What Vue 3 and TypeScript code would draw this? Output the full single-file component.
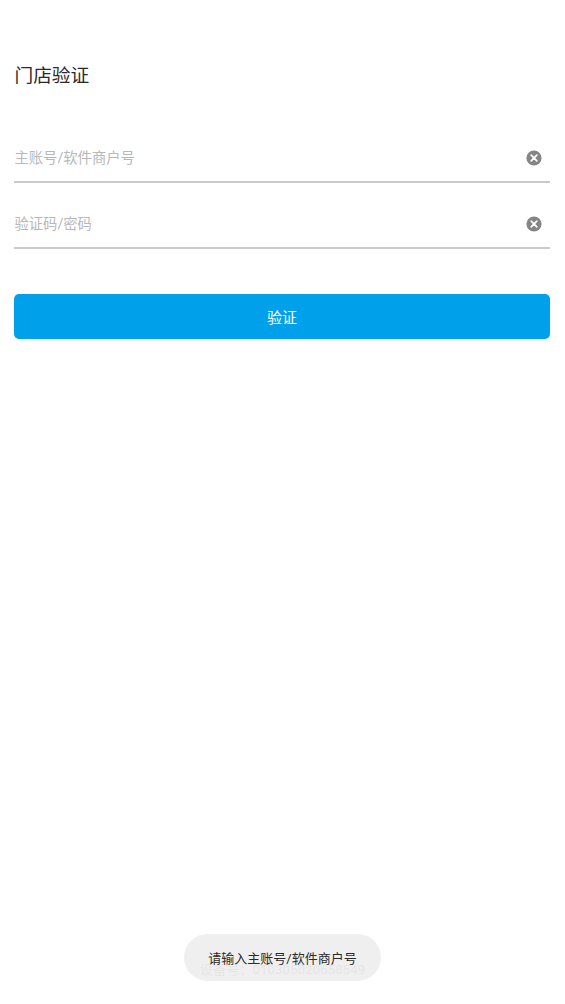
<script setup lang="ts">
const fields: string[] = ['主账号/软件商户号', '验证码/密码']
</script>

<template>
  <div class="page">
    <h1 class="title">门店验证</h1>
    <div class="fields">
      <div v-for="f in fields" :key="f" class="field">
        <span class="placeholder">{{ f }}</span>
        <svg class="clear" width="16" height="16" viewBox="0 0 16 16">
          <circle cx="8" cy="8" r="7.6" fill="#858585" />
          <path d="M5.2 5.2 10.8 10.8M10.8 5.2 5.2 10.8" stroke="#fff" stroke-width="1.7" stroke-linecap="round" />
        </svg>
      </div>
    </div>
    <button class="submit" type="button">验证</button>
    <div class="spacer"></div>
    <div class="device">设备号：010305020658549</div>
    <div class="toast">请输入主账号/软件商户号</div>
  </div>
</template>

<style>
html, body { margin: 0; background: #fff; }
</style>

<style scoped>
.page {
  position: relative;
  box-sizing: border-box;
  width: 565px;
  height: 1004px;
  padding: 63px 15px 0 14px;
  display: flex;
  flex-direction: column;
  background: #fff;
  font-family: "Roboto", "Noto Sans CJK SC", sans-serif;
  overflow: hidden;
}
.title {
  margin: 0;
  padding-left: 0.5px;
  font-size: 18.7px;
  font-weight: 400;
  line-height: 26px;
  color: #2a2a2a;
}
.fields {
  margin-top: 46px;
  display: flex;
  flex-direction: column;
  gap: 18px;
}
.field {
  box-sizing: border-box;
  height: 48px;
  display: flex;
  align-items: center;
  justify-content: space-between;
  padding: 0 8.5px 4px 0.5px;
  border-bottom: 2px solid #cacaca;
}
.placeholder {
  font-size: 14.3px;
  color: #b8b8b8;
}
.clear {
  display: block;
  margin-top: 4px;
}
.submit {
  margin-top: 45px;
  height: 45px;
  border: 0;
  border-radius: 5px;
  background: #00a0eb;
  color: #fff;
  font: inherit;
  font-size: 15px;
  padding: 0;
}
.spacer { flex: 1; }
.device {
  padding-bottom: 24px;
  padding-left: 1px;
  text-align: center;
  font-size: 13px;
  line-height: 20px;
  letter-spacing: 0.2px;
  color: #c8c8c8;
}
.toast {
  position: absolute;
  left: 184px;
  top: 934px;
  box-sizing: border-box;
  width: 197px;
  height: 47px;
  border-radius: 24px;
  background: rgba(236, 236, 236, 0.82);
  color: #2a2a2a;
  font-size: 13px;
  line-height: 50px;
  text-align: center;
  white-space: nowrap;
}
</style>
